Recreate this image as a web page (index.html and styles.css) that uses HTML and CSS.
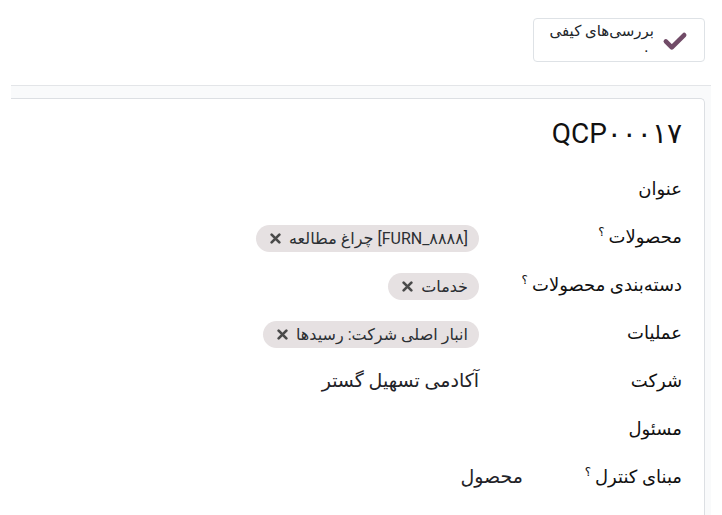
FILE: index.html
```
<!DOCTYPE html>
<html lang="fa" dir="rtl">
<head>
    <meta charset="UTF-8">
    <meta name="viewport" content="width=device-width, initial-scale=1.0">
    <title>QCP۰۰۰۱۷</title>
    <link rel="stylesheet" href="styles.css">
</head>
<body>
    <!-- نوار بالا با دکمه آمار -->
    <div class="topbar">
        <div class="stat-btn">
            <svg class="stat-icon" viewBox="0 0 24 24" width="26" height="22">
                <path d="M2 12.5 L8.5 19 L22 5.5" fill="none" stroke="#714b67" stroke-width="5" stroke-linecap="round" stroke-linejoin="round"/>
            </svg>
            <div class="stat-text">
                <span class="stat-label">بررسی‌های کیفی</span>
                <span class="stat-value">۰</span>
            </div>
        </div>
    </div>

    <div class="sheet-bg">
        <div class="sheet">
            <h1 class="title">QCP۰۰۰۱۷</h1>

            <div class="form">
                <div class="row">
                    <div class="label">عنوان</div>
                    <div class="value"></div>
                </div>
                <div class="row">
                    <div class="label">محصولات<sup>؟</sup></div>
                    <div class="value">
                        <span class="tag">[FURN_۸۸۸۸] چراغ مطالعه
                            <svg class="x" viewBox="0 0 10 10" width="11" height="11"><path d="M1.5 1.5 L8.5 8.5 M8.5 1.5 L1.5 8.5"/></svg>
                        </span>
                    </div>
                </div>
                <div class="row">
                    <div class="label">دسته‌بندی محصولات<sup>؟</sup></div>
                    <div class="value">
                        <span class="tag">خدمات
                            <svg class="x" viewBox="0 0 10 10" width="11" height="11"><path d="M1.5 1.5 L8.5 8.5 M8.5 1.5 L1.5 8.5"/></svg>
                        </span>
                    </div>
                </div>
                <div class="row">
                    <div class="label">عملیات</div>
                    <div class="value">
                        <span class="tag">انبار اصلی شرکت: رسیدها
                            <svg class="x" viewBox="0 0 10 10" width="11" height="11"><path d="M1.5 1.5 L8.5 8.5 M8.5 1.5 L1.5 8.5"/></svg>
                        </span>
                    </div>
                </div>
                <div class="row">
                    <div class="label">شرکت</div>
                    <div class="value">آکادمی تسهیل گستر</div>
                </div>
                <div class="row">
                    <div class="label">مسئول</div>
                    <div class="value"></div>
                </div>
                <div class="row row-narrow">
                    <div class="label">مبنای کنترل<sup>؟</sup></div>
                    <div class="value">محصول</div>
                </div>
            </div>
        </div>
    </div>
</body>
</html>
```

FILE: styles.css
```
html,body{
    height: 100%;
}
body{
    margin: 0;
    direction: rtl;
    background: #fff;
    color: #1f2328;
    font-family: Roboto, "DejaVu Sans", sans-serif;
    overflow: hidden;
    display: flex;
    flex-direction: column;
}
.topbar{
    height: 85px;
    flex-shrink: 0;
    display: flex;
    align-items: flex-start;
}
.stat-btn{
    margin: 18px 17px 0 0;
    width: 172px;
    height: 44px;
    box-sizing: border-box;
    border: 1px solid #dee2e6;
    border-radius: 4px;
    display: flex;
    align-items: center;
    padding-right: 16px;
}
.stat-icon{
    margin-left: 8px;
    margin-top: 2px;
}
.stat-text{
    display: flex;
    flex-direction: column;
    align-items: flex-start;
    font-size: 15px;
    line-height: 18px;
    color: #212529;
    margin-top: -1px;
}
.stat-value{
    font-size: 14px;
    line-height: 16px;
    margin-right: 4px;
    margin-top: 2px;
}
.sheet-bg{
    flex: 1;
    display: flex;
    flex-direction: column;
    margin: 0 11px 0 11px;
    border-top: 1px solid #e3e5e8;
    background: #f9fafb;
    padding-top: 12px;
}
.sheet{
    flex: 1;
    background: #fff;
    border-top: 1px solid #dcdfe3;
    border-right: 1px solid #dcdfe3;
    border-top-right-radius: 5px;
    margin-right: 6px;
    padding-right: 22px;
}
.title{
    margin: 0;
    padding-top: 15px;
    font-size: 28px;
    font-weight: 400;
    line-height: 40px;
    color: #111;
}
.form{
    margin-top: 10px;
}
.row{
    display: grid;
    grid-template-columns: 203px 1fr;
    align-items: center;
    height: 48px;
    font-size: 18px;
}
.row-narrow{
    grid-template-columns: 159px 1fr;
}
.label{
    color: #111;
}
.label sup{
    font-size: 12px;
    margin-right: 4px;
}
.value{
    color: #1f2328;
    font-size: 19px;
}
.tag{
    display: inline-flex;
    align-items: center;
    height: 27px;
    margin-top: 4px;
    padding: 0 11px 0 14px;
    border-radius: 14px;
    background: #e6e1e2;
    font-size: 16px;
    color: #2b2f33;
}
.x{
    margin-right: 8px;
    fill: none;
    stroke: #4a4a4a;
    stroke-width: 2.4;
    stroke-linecap: round;
}
```
